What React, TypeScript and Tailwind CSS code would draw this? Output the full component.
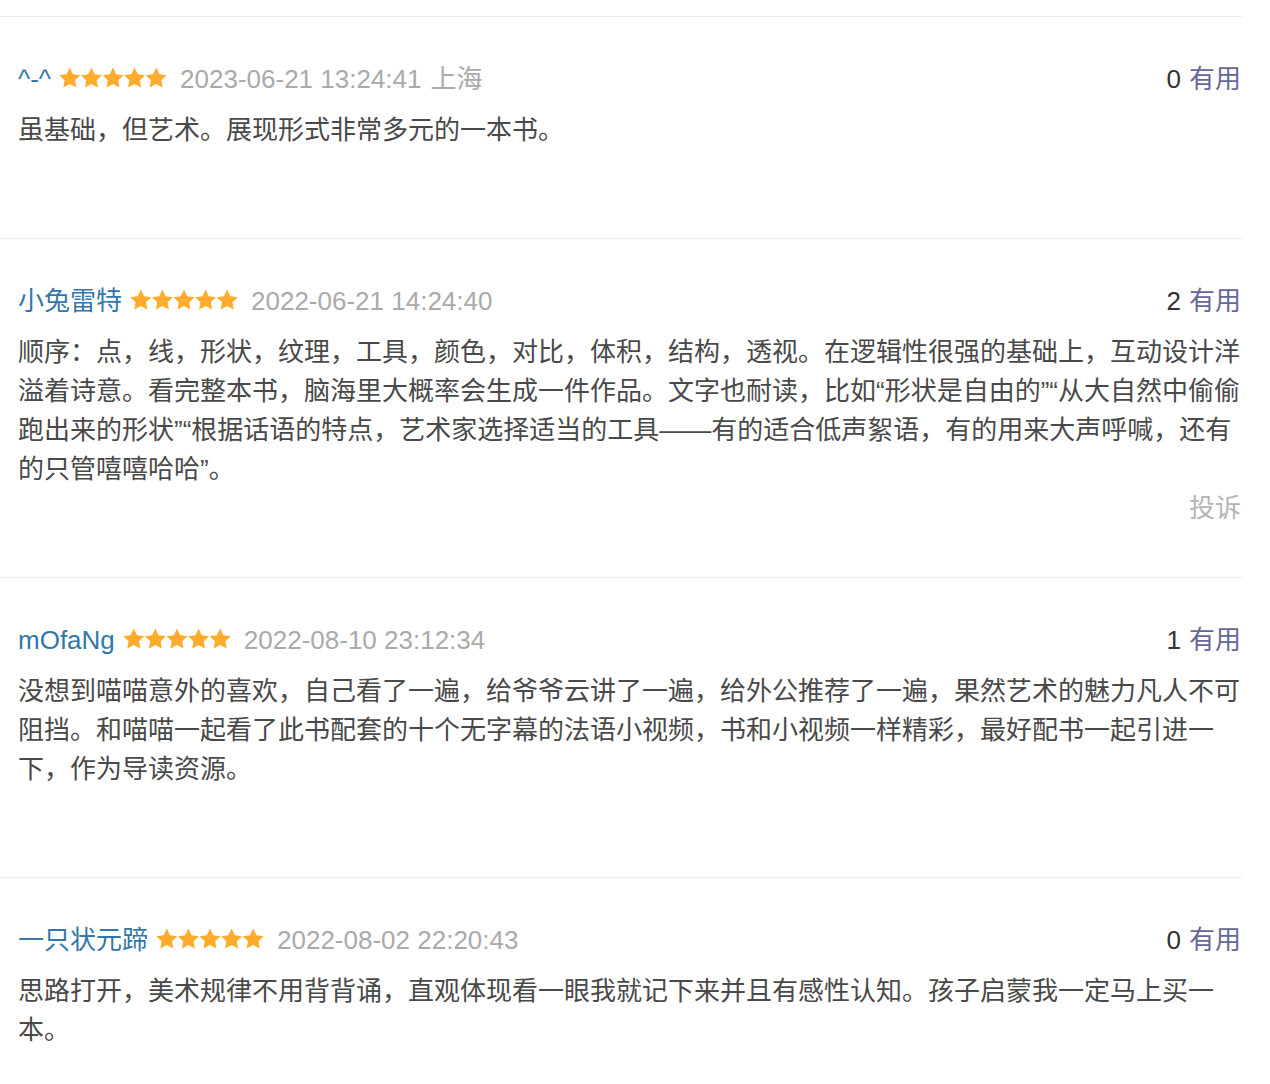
import React from "react";

type Comment = {
  name: string;
  date: string;
  place?: string;
  votes: number;
  text: string;
  report?: boolean;
};

const comments: Comment[] = [
  {
    name: "^-^",
    date: "2023-06-21 13:24:41",
    place: "上海",
    votes: 0,
    text: "虽基础，但艺术。展现形式非常多元的一本书。",
  },
  {
    name: "小兔雷特",
    date: "2022-06-21 14:24:40",
    votes: 2,
    text: "顺序：点，线，形状，纹理，工具，颜色，对比，体积，结构，透视。在逻辑性很强的基础上，互动设计洋溢着诗意。看完整本书，脑海里大概率会生成一件作品。文字也耐读，比如“形状是自由的”“从大自然中偷偷跑出来的形状”“根据话语的特点，艺术家选择适当的工具——有的适合低声絮语，有的用来大声呼喊，还有的只管嘻嘻哈哈”。",
    report: true,
  },
  {
    name: "mOfaNg",
    date: "2022-08-10 23:12:34",
    votes: 1,
    text: "没想到喵喵意外的喜欢，自己看了一遍，给爷爷云讲了一遍，给外公推荐了一遍，果然艺术的魅力凡人不可阻挡。和喵喵一起看了此书配套的十个无字幕的法语小视频，书和小视频一样精彩，最好配书一起引进一下，作为导读资源。",
  },
  {
    name: "一只状元蹄",
    date: "2022-08-02 22:20:43",
    votes: 0,
    text: "思路打开，美术规律不用背背诵，直观体现看一眼我就记下来并且有感性认知。孩子启蒙我一定马上买一本。",
  },
];

// fat five-point star, ~21px wide
const STAR =
  "M10.8 0.6L14.03 7.15L21.26 8.2L16.03 13.3L17.27 20.5L10.8 17.1L4.33 20.5L5.57 13.3L0.34 8.2L7.57 7.15Z";

function Stars() {
  return (
    <svg width="108" height="22" viewBox="0 0 108 22" className="block">
      {[0, 1, 2, 3, 4].map((i) => (
        <path key={i} d={STAR} transform={`translate(${i * 21.6} 0)`} fill="#ffac2d" />
      ))}
    </svg>
  );
}

function CommentItem({ c }: { c: Comment }) {
  return (
    <div className="border-t border-[#ececec] pl-[18px] pr-[1px] pt-[42px] pb-[49px]">
      <div className="flex h-[40px] items-center justify-between">
        <div className="flex items-center">
          <span className="text-[#3377aa]">{c.name}</span>
          <span className="ml-[8px] mr-[13px] flex items-center pb-[2px]">
            <Stars />
          </span>
          <span className="text-[#aaaaaa]">
            {c.date}
            {c.place && <span className="ml-[9px]">{c.place}</span>}
          </span>
        </div>
        <div>
          <span className="text-[#333333]">{c.votes}</span>
          <span className="ml-[8px] text-[#666699]">有用</span>
        </div>
      </div>
      <p className="mt-[12px] leading-[39px] text-[#494949]">{c.text}</p>
      <div className="flex h-[39px] items-center justify-end">
        {c.report && <span className="text-[#b5b5b5]">投诉</span>}
      </div>
    </div>
  );
}

export default function App() {
  return (
    <div
      className="min-h-screen bg-white pt-[16px] text-[26px]"
      style={{ fontFamily: '"Liberation Sans", "Noto Sans CJK SC", sans-serif' }}
    >
      <div className="w-[1242px]">
        {comments.map((c) => (
          <CommentItem key={c.name} c={c} />
        ))}
      </div>
    </div>
  );
}
